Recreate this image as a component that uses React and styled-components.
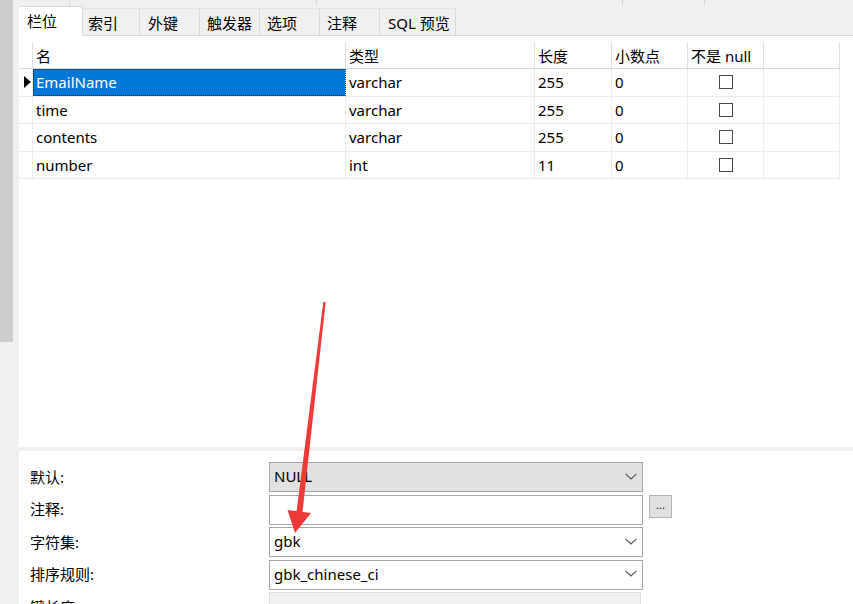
import styled, { createGlobalStyle } from "styled-components";

const GlobalStyle = createGlobalStyle`
  * { box-sizing: border-box; }
  body {
    margin: 0;
    background: #fff;
    color: #000;
    font-family: "Noto Sans", "Noto Sans CJK SC", sans-serif;
    font-size: 15px;
  }
`;

const Page = styled.div`
  position: relative;
  display: flex;
  width: 853px;
  height: 604px;
  overflow: hidden;
`;

const LeftRail = styled.div`
  flex: none;
  width: 19px;
  background: #f0f0f0;
`;

const RailThumb = styled.div`
  width: 13px;
  height: 342px;
  background: #cdcdcd;
`;

const Main = styled.div`
  flex: 1;
  min-width: 0;
  display: flex;
  flex-direction: column;
`;

const TopStrip = styled.div`
  display: flex;
  height: 7px;
  background: #f0f0f0;
`;

const StripSeg = styled.div`
  width: ${(p) => p.$w}px;
  height: 6px;
  border-right: 1px solid #d9d9d9;
`;

const TabBar = styled.div`
  display: flex;
  align-items: flex-end;
  height: 29px;
  background: #f0f0f0;
  border-bottom: 1px solid #d9d9d9;
`;

const Tab = styled.div`
  display: flex;
  align-items: center;
  width: ${(p) => p.$w}px;
  height: ${(p) => (p.$active ? 30 : 27)}px;
  margin-bottom: ${(p) => (p.$active ? -1 : 0)}px;
  padding-left: ${(p) => p.$pad}px;
  padding-bottom: ${(p) => (p.$active ? 2 : 0)}px;
  background: ${(p) => (p.$active ? "#fff" : "#f0f0f0")};
  border-top: 1px solid ${(p) => (p.$active ? "#d9d9d9" : "#e4e4e4")};
  border-right: 1px solid #d9d9d9;
  white-space: nowrap;
`;

const GridArea = styled.div`
  height: 411px;
  padding-top: 6px;
  background: #fff;
`;

const COLS = "14px 313px 189px 77px 76px 76px 76px";

const GridRow = styled.div`
  display: grid;
  grid-template-columns: ${COLS};
  height: ${(p) => (p.$head ? 27 : 27.5)}px;
  border-bottom: 1px solid ${(p) => (p.$head ? "#dadada" : "#ececec")};
  width: 821px;
`;

const Cell = styled.div`
  display: flex;
  align-items: center;
  justify-content: ${(p) => (p.$center ? "center" : "flex-start")};
  padding-left: ${(p) => (p.$center ? 0 : 3)}px;
  border-right: 1px solid ${(p) => (p.$head ? "#e2e2e2" : "#ececec")};
  background: ${(p) => (p.$selected ? "#0078d7" : "transparent")};
  color: ${(p) => (p.$selected ? "#fff" : "#000")};
  outline: ${(p) => (p.$selected ? "1px dotted #2a2a2a" : "none")};
  outline-offset: -1px;
  white-space: nowrap;
  overflow: hidden;
`;

const Pointer = styled.span`
  width: 0;
  height: 0;
  margin-left: 2px;
  border-top: 6px solid transparent;
  border-bottom: 6px solid transparent;
  border-left: 7px solid #000;
`;

const CheckBox = styled.span`
  width: 14px;
  height: 14px;
  border: 1px solid #4a4a4a;
  background: #fff;
`;

const Band = styled.div`
  height: 4px;
  background: #f0f0f0;
`;

const FormPanel = styled.div`
  flex: 1;
  padding: 11px 0 0 11px;
  background: #fff;
  overflow: hidden;
`;

const FormRow = styled.div`
  display: flex;
  align-items: center;
  height: 30px;
  margin-bottom: 2.5px;
`;

const Label = styled.div`
  width: 239px;
  flex: none;
  padding-bottom: 2px;
`;

const Field = styled.div`
  display: flex;
  align-items: center;
  justify-content: space-between;
  width: ${(p) => (p.$disabled ? 372 : 374)}px;
  height: 30px;
  padding: 0 5px 2px 4px;
  border: 1px solid ${(p) => (p.$disabled ? "#dedede" : "#a6a6a6")};
  background: ${(p) =>
    p.$disabled ? "#f0f0f0" : p.$gray ? "#e1e1e1" : "#fff"};
`;

const DotsButton = styled.div`
  align-self: flex-start;
  display: flex;
  align-items: center;
  justify-content: center;
  width: 23px;
  height: 23px;
  margin-left: 6px;
  border: 1px solid #b4b4b4;
  background: #e1e1e1;
  font-size: 11px;
  line-height: 1;
  padding-bottom: 3px;
  color: #222;
`;

const Overlay = styled.svg`
  position: absolute;
  left: 0;
  top: 0;
  pointer-events: none;
`;

const Chevron = () => (
  <svg width="12" height="7" viewBox="0 0 12 7">
    <polyline points="0.5,0.8 6,6 11.5,0.8" fill="none" stroke="#555" strokeWidth="1.1" />
  </svg>
);

const tabs = [
  { label: "栏位", w: 64, pad: 8, active: true },
  { label: "索引", w: 57, pad: 5 },
  { label: "外键", w: 60, pad: 8 },
  { label: "触发器", w: 60, pad: 7 },
  { label: "选项", w: 60, pad: 7 },
  { label: "注释", w: 60, pad: 7 },
  { label: "SQL 预览", w: 76, pad: 8 },
];

const fields = [
  { name: "EmailName", type: "varchar", len: "255", dec: "0" },
  { name: "time", type: "varchar", len: "255", dec: "0" },
  { name: "contents", type: "varchar", len: "255", dec: "0" },
  { name: "number", type: "int", len: "11", dec: "0" },
];

export default function App() {
  return (
    <Page>
      <GlobalStyle />
      <LeftRail>
        <RailThumb />
      </LeftRail>
      <Main>
        <TopStrip>
          <StripSeg $w={51} />
          <StripSeg $w={247} />
          <StripSeg $w={306} />
          <StripSeg $w={82} />
        </TopStrip>
        <TabBar>
          {tabs.map((t) => (
            <Tab key={t.label} $w={t.w} $pad={t.pad} $active={t.active}>
              {t.label}
            </Tab>
          ))}
        </TabBar>
        <GridArea>
          <GridRow $head>
            <Cell $head />
            <Cell $head>名</Cell>
            <Cell $head>类型</Cell>
            <Cell $head>长度</Cell>
            <Cell $head>小数点</Cell>
            <Cell $head>不是 null</Cell>
            <Cell $head />
          </GridRow>
          {fields.map((f, i) => (
            <GridRow key={f.name}>
              <Cell>{i === 0 && <Pointer />}</Cell>
              <Cell $selected={i === 0}>{f.name}</Cell>
              <Cell>{f.type}</Cell>
              <Cell>{f.len}</Cell>
              <Cell>{f.dec}</Cell>
              <Cell $center>
                <CheckBox />
              </Cell>
              <Cell />
            </GridRow>
          ))}
        </GridArea>
        <Band />
        <FormPanel>
          <FormRow>
            <Label>默认:</Label>
            <Field $gray>
              <span>NULL</span>
              <Chevron />
            </Field>
          </FormRow>
          <FormRow>
            <Label>注释:</Label>
            <Field />
            <DotsButton>...</DotsButton>
          </FormRow>
          <FormRow>
            <Label>字符集:</Label>
            <Field>
              <span>gbk</span>
              <Chevron />
            </Field>
          </FormRow>
          <FormRow>
            <Label>排序规则:</Label>
            <Field>
              <span>gbk_chinese_ci</span>
              <Chevron />
            </Field>
          </FormRow>
          <FormRow>
            <Label>键长度:</Label>
            <Field $disabled />
          </FormRow>
        </FormPanel>
      </Main>
      <Overlay width="853" height="604" viewBox="0 0 853 604">
        <polygon points="323.3,302 325.7,302 302.5,512 296.5,512" fill="#f03a3a" />
        <polygon points="287.5,510 311,513 295,533" fill="#f03a3a" />
      </Overlay>
    </Page>
  );
}
